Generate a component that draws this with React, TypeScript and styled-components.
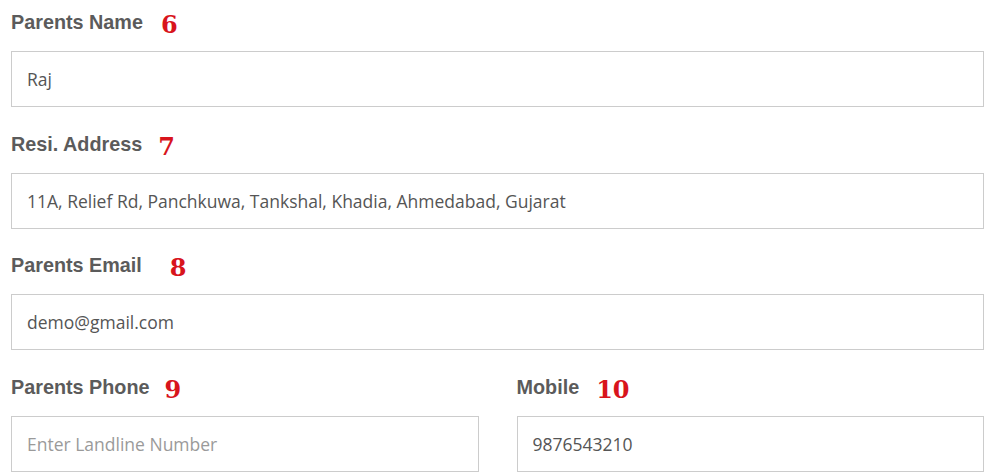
import React from "react";
import styled, { createGlobalStyle } from "styled-components";

const GlobalStyle = createGlobalStyle`
	* {
		box-sizing: border-box;
	}
	body {
		margin: 0;
		background: #ffffff;
		font-family: "Open Sans", "Liberation Sans", sans-serif;
	}
`;

const Form = styled.form`
	padding: 7px 4px 0 11px;
`;

const Row = styled.div`
	display: grid;
	grid-template-columns: 1fr 1fr;
	column-gap: 38px;
`;

const Field = styled.div`
	display: flex;
	flex-direction: column;
`;

const Label = styled.label`
	display: block;
	height: 30px;
	line-height: 30px;
	margin-bottom: 14px;
	font-family: "Liberation Sans", Arial, sans-serif;
	font-weight: 700;
	font-size: 19.8px;
	color: #5b5b5b;
	white-space: nowrap;
`;

const Marker = styled.span<{ $gap: number }>`
	display: inline-block;
	margin-left: ${(p) => p.$gap}px;
	line-height: 20px;
	vertical-align: -4px;
	font-family: "DejaVu Serif", "Liberation Serif", serif;
	font-weight: 700;
	font-size: 24px;
	color: #d8141c;
`;

const Input = styled.input`
	display: block;
	width: 100%;
	height: 56px;
	margin: 0 0 21.5px;
	padding: 0 15px;
	border: 1px solid #cccccc;
	border-radius: 0;
	background: #ffffff;
	font-family: "Open Sans", sans-serif;
	font-size: 17.5px;
	color: #555555;
	outline: none;

	&::placeholder {
		color: #9a9a9a;
	}
`;

type FieldProps = {
	label: string;
	mark: string;
	gap: number;
	value?: string;
	placeholder?: string;
};

const FormField = ({ label, mark, gap, value, placeholder }: FieldProps) => (
	<Field>
		<Label>
			{label}
			<Marker $gap={gap}>{mark}</Marker>
		</Label>
		<Input type="text" defaultValue={value} placeholder={placeholder} />
	</Field>
);

const App = () => {
	return (
		<>
			<GlobalStyle />
			<Form>
				<FormField label="Parents Name" mark="6" gap={18} value="Raj" />
				<FormField
					label="Resi. Address"
					mark="7"
					gap={16}
					value="11A, Relief Rd, Panchkuwa, Tankshal, Khadia, Ahmedabad, Gujarat"
				/>
				<FormField label="Parents Email" mark="8" gap={28} value="demo@gmail.com" />
				<Row>
					<FormField label="Parents Phone" mark="9" gap={15} placeholder="Enter Landline Number" />
					<FormField label="Mobile" mark="10" gap={17} value="9876543210" />
				</Row>
			</Form>
		</>
	);
};

export default App;
